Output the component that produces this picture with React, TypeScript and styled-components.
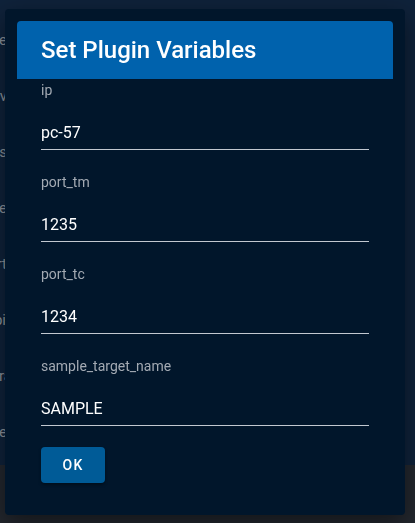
import React from "react";
import styled, { createGlobalStyle } from "styled-components";

const Global = createGlobalStyle`
  html, body { margin: 0; padding: 0; }
  body {
    width: 415px;
    height: 523px;
    overflow: hidden;
    background: #23272e;
    font-family: Roboto, "Liberation Sans", Arial, sans-serif;
  }
`;

const Page = styled.div`
  width: 415px;
  height: 523px;
  display: flex;
  flex-direction: column;
`;

const Panel = styled.div`
  height: 465px;
  background: #0f223a;
  display: flex;
`;

const ClipColumn = styled.div`
  width: 5px;
  overflow: hidden;
  padding-top: 12px;
  display: flex;
  flex-direction: column;
`;

const BgRow = styled.div<{ $edge: number }>`
  width: ${(p) => p.$edge}px;
  height: 56px;
  display: flex;
  align-items: center;
  justify-content: flex-end;
  white-space: nowrap;
  color: #8a9199;
  font-size: 15px;
`;

const Rest = styled.div`
  flex: 1;
  background: #23272e;
`;

const Dialog = styled.div`
  position: fixed;
  top: 9px;
  left: 5px;
  width: 400px;
  box-sizing: border-box;
  background: #01162b;
  border-radius: 4px;
  padding: 12px 12px 32px;
  box-shadow: 0 8px 24px rgba(0, 0, 0, 0.45);
`;

const Header = styled.div`
  height: 58px;
  background: #0062ad;
  border-radius: 4px 4px 0 0;
  display: flex;
  align-items: center;
  padding: 0 24px;
  margin-bottom: 1px;
`;

const Title = styled.h2`
  margin: 0;
  color: #ffffff;
  font-size: 24px;
  line-height: 32px;
  font-weight: 500;
  letter-spacing: 0;
`;

const Body = styled.div`
  padding: 0 24px;
  display: flex;
  flex-direction: column;
  gap: 22px;
`;

const Field = styled.div`
  display: flex;
  flex-direction: column;
`;

const Label = styled.label`
  font-size: 14px;
  line-height: 20px;
  color: #a3aab3;
`;

const Input = styled.input`
  box-sizing: content-box;
  padding: 21px 0 4px;
  height: 24px;
  border: none;
  border-bottom: 1px solid #c2c8d0;
  background: transparent;
  color: #ffffff;
  font-family: inherit;
  font-size: 16px;
  line-height: 24px;
  outline: none;
`;

const Actions = styled.div`
  display: flex;
  margin-top: -1px;
`;

const OkButton = styled.button`
  width: 64px;
  height: 36px;
  border: none;
  border-radius: 4px;
  background: #005b97;
  color: #ffffff;
  font-family: inherit;
  font-size: 14px;
  font-weight: 500;
  letter-spacing: 1.25px;
  box-shadow: 0 2px 3px rgba(0, 0, 0, 0.35);
  cursor: pointer;
`;

const bgTexts = [
  { t: "Name", edge: 7 },
  { t: "Dev", edge: 7 },
  { t: "Status", edge: 7 },
  { t: "Type", edge: 7 },
  { t: "Port", edge: 7 },
  { t: "Api", edge: 6 },
  { t: "Extra", edge: 12 },
  { t: "Date", edge: 7 },
];

const fields = [
  { name: "ip", value: "pc-57" },
  { name: "port_tm", value: "1235" },
  { name: "port_tc", value: "1234" },
  { name: "sample_target_name", value: "SAMPLE" },
];

export default function App() {
  return (
    <>
      <Global />
      <Page>
        <Panel>
          <ClipColumn>
            {bgTexts.map((b) => (
              <BgRow key={b.t} $edge={b.edge}>
                {b.t}
              </BgRow>
            ))}
          </ClipColumn>
        </Panel>
        <Rest />
      </Page>
      <Dialog>
        <Header>
          <Title>Set Plugin Variables</Title>
        </Header>
        <Body>
          {fields.map((f) => (
            <Field key={f.name}>
              <Label>{f.name}</Label>
              <Input defaultValue={f.value} />
            </Field>
          ))}
          <Actions>
            <OkButton>OK</OkButton>
          </Actions>
        </Body>
      </Dialog>
    </>
  );
}
